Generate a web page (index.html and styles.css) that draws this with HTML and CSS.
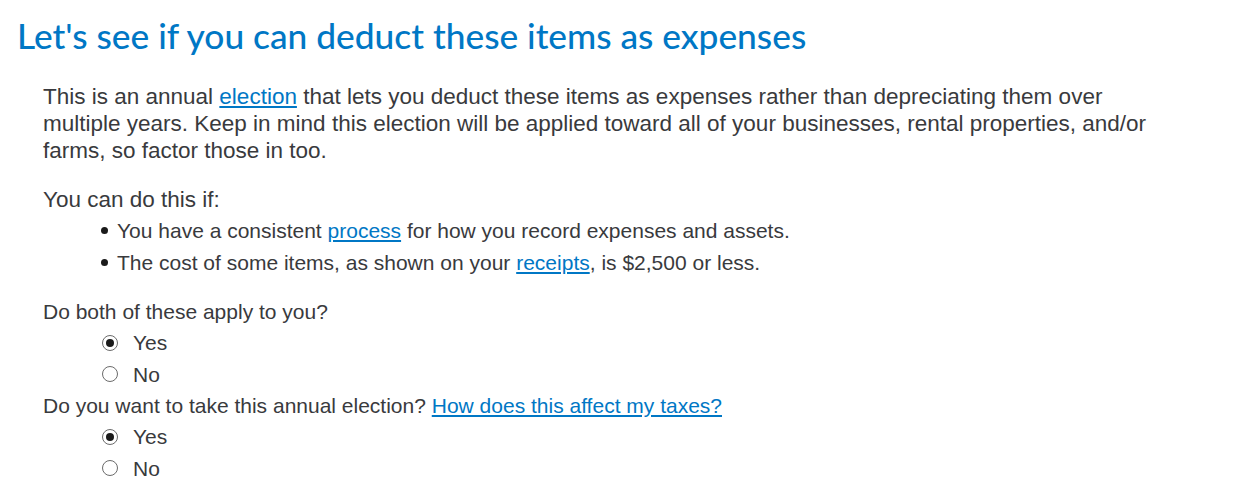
FILE: index.html
```html
<!DOCTYPE html>
<html lang="en">
<head>
    <meta charset="UTF-8">
    <title>Deduct items as expenses</title>
    <link rel="stylesheet" href="styles.css">
</head>
<body>
<h1 class="title">Let's see if you can deduct these items as expenses</h1>
<div class="content">
    <p class="intro">This is an annual <a href="#">election</a> that lets you deduct these items as expenses rather than depreciating them over multiple years. Keep in mind this election will be applied toward all of your businesses, rental properties, and/or farms, so factor those in too.</p>

    <p class="lead">You can do this if:</p>
    <ul class="conditions">
        <li>You have a consistent <a href="#">process</a> for how you record expenses and assets.</li>
        <li>The cost of some items, as shown on your <a href="#">receipts</a>, is $2,500 or less.</li>
    </ul>

    <!-- first question -->
    <div class="question">
        <div class="question-text">Do both of these apply to you?</div>
        <label class="choice"><input type="radio" name="apply" checked> Yes</label>
        <label class="choice"><input type="radio" name="apply"> No</label>
    </div>

    <!-- second question -->
    <div class="question">
        <div class="question-text">Do you want to take this annual election? <a href="#">How does this affect my taxes?</a></div>
        <label class="choice"><input type="radio" name="election" checked> Yes</label>
        <label class="choice"><input type="radio" name="election"> No</label>
    </div>
</div>
</body>
</html>
```

FILE: styles.css
```css
body {
    margin: 0;
    background-color: #ffffff;
    color: #393a3d;
    font-family: "Liberation Sans", Arial, sans-serif;
}
a {
    color: #0077c5;
    text-decoration: underline;
}
.title {
    margin: 0;
    padding: 15px 0 0 17px;
    font-family: Lato, "Open Sans", sans-serif;
    font-weight: 500;
    font-size: 35.3px;
    line-height: 42px;
    color: #0077c5;
}
.content {
    padding: 26px 0 0 43px;
    width: 1120px;
}
.intro {
    margin: 0;
    font-size: 22.5px;
    line-height: 27px;
}
.lead {
    margin: 22px 0 0 0;
    font-size: 22.5px;
    line-height: 27px;
}
.conditions {
    margin: 2px 0 0 0;
    padding-left: 74px;
    list-style: none;
    font-size: 21px;
    line-height: 32px;
}
.conditions li::before {
    content: "";
    display: inline-block;
    vertical-align: middle;
    width: 7px;
    height: 7px;
    margin: -3px 9px 0 -16px;
    border-radius: 50%;
    background: #1a1a1a;
}
.question {
    display: flex;
    flex-direction: column;
}
.conditions + .question {
    margin-top: 17px;
}
.question-text {
    font-size: 21px;
    line-height: 31px;
}
.choice {
    display: flex;
    align-items: center;
    gap: 15px;
    padding-left: 59px;
    font-size: 21px;
    line-height: 31.5px;
}
.choice input {
    appearance: none;
    -webkit-appearance: none;
    margin: 0;
    width: 16px;
    height: 16px;
    border: 1px solid #6b6b6b;
    border-radius: 50%;
    display: flex;
    align-items: center;
    justify-content: center;
    background: #fff;
}
.choice input:checked::after {
    content: "";
    width: 8px;
    height: 8px;
    border-radius: 50%;
    background: #1a1a1a;
}
```
